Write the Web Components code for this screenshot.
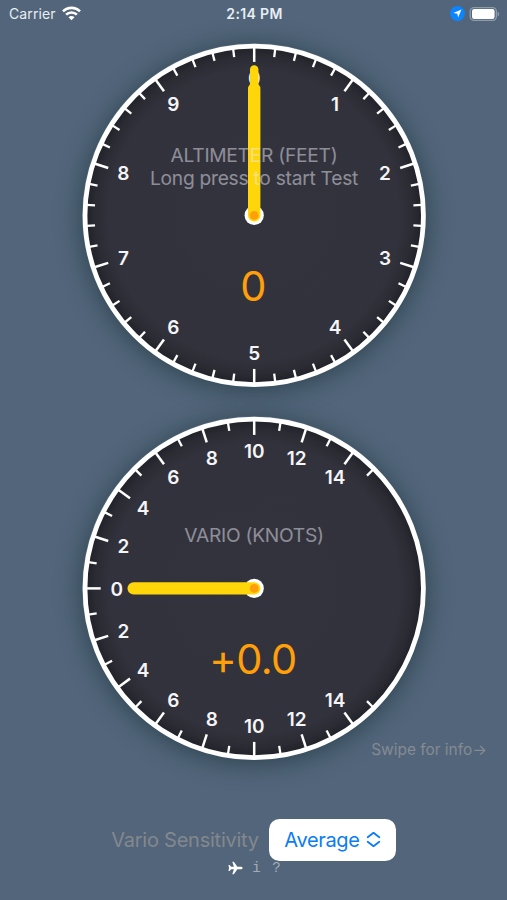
<!DOCTYPE html>
<html lang="en">
<head>
<meta charset="utf-8">
<title>Vario</title>
<style>
html,body{margin:0;height:100%}
body{background:#52657a;font-family:Inter,"Liberation Sans",sans-serif;overflow:hidden}
</style>
</head>
<body>
<vario-app></vario-app>
<script>
const define = (name, html, setup) => customElements.define(name, class extends HTMLElement {
  constructor() {
    super();
    this.attachShadow({ mode: 'open' }).innerHTML = html;
  }
  connectedCallback() { if (setup) setup(this, this.shadowRoot); }
});

define('status-bar', `
<style>
:host{display:grid;grid-template-columns:1fr auto 1fr;align-items:center;height:27px;padding:0 7px 0 9px;box-sizing:border-box;color:#e8eef3;font-size:14px}
.left,.right{display:flex;align-items:center}
.left{gap:6px;letter-spacing:.1px}
.right{justify-content:flex-end;gap:4px}
.time{font-weight:600;font-size:14px;letter-spacing:.35px}
svg{display:block}
</style>
<div class="left"><span>Carrier</span>
<svg width="19" height="15" viewBox="0 0 19 15" fill="none" stroke="#fff" stroke-width="2.6"><path d="M1 5.4a12 12 0 0 1 17 0"/><path d="M4.1 8.7a7.6 7.6 0 0 1 10.8 0"/><path d="M9.5 14.2 6.5 11.2a4.2 4.2 0 0 1 6 0z" fill="#fff" stroke="none"/></svg></div>
<div class="time">2:14 PM</div>
<div class="right">
<svg width="15" height="15" viewBox="0 0 15 15"><circle cx="7.5" cy="7.5" r="7.4" fill="#0a84ff"/><path d="M11.5 3.6 8.1 11.6 7.4 7.7 3.4 7z" fill="#fff"/></svg>
<svg width="31" height="14" viewBox="0 0 31 14"><rect x="1.2" y=".7" width="26.2" height="12.6" rx="3.8" fill="none" stroke="#8f9caa" stroke-width="1.3"/><rect x="3" y="2.1" width="22.6" height="9.8" rx="2.2" fill="#fff"/><path d="M28.6 4.7c2 .7 2 3.9 0 4.6z" fill="#8f9caa"/></svg>
</div>`);

define('dial-gauge', `
<style>
:host{display:block;position:relative;width:344px;height:344px;border-radius:50%;box-shadow:0 3px 24px rgba(20,45,50,.62)}
svg{display:block;overflow:visible}
text{font:600 19px Inter,"Liberation Sans",sans-serif;fill:#f5f5f7;text-anchor:middle}
.caption,.value{position:absolute;left:0;right:0;text-align:center;white-space:nowrap}
.caption{top:var(--caption-top);font-size:19.2px;letter-spacing:-.26px;line-height:23.5px;color:rgba(235,235,245,.5)}
.value{top:218px;right:2px;font-size:41.5px;line-height:50px;font-weight:400;letter-spacing:-.6px;color:#ff9f0a}
</style>
<svg width="344" height="344" viewBox="-172.2 -172.4 344 344">
<defs><radialGradient id="face"><stop offset="0" stop-color="#33333d"/><stop offset=".86" stop-color="#32323c"/><stop offset=".94" stop-color="#2b2b34"/><stop offset="1" stop-color="#202027"/></radialGradient></defs>
<circle r="169" fill="url(#face)"/>
<g class="scale" stroke="#fff"></g><g class="labels"></g>
<circle r="169.2" fill="none" stroke="#fff" stroke-width="4.8"/>
<circle r="9.6" fill="#fff"/>
<g class="hands" stroke="#ffd60a" stroke-linecap="round"></g>
<circle r="4.4" fill="#ff9f0a"/>
</svg>
<div class="caption"><slot></slot></div><div class="value"><slot name="value"></slot></div>`,
(host, root) => {
  const polar = (deg, r) => {
    const a = deg * Math.PI / 180;
    return [(r * Math.sin(a)).toFixed(2), (-r * Math.cos(a)).toFixed(2)];
  };
  const tick = (deg, major) => {
    const [x1, y1] = polar(deg, 168), [x2, y2] = polar(deg, major ? 153.5 : 159.5);
    return `<line x1="${x1}" y1="${y1}" x2="${x2}" y2="${y2}" stroke-width="${major ? 2.5 : 2.3}"/>`;
  };
  const label = (deg, text) => {
    const [x, y] = polar(deg, 137.5);
    return `<text x="${x}" y="${+y + 7.3}">${text}</text>`;
  };
  let ticks = '', labels = '', hands = '';
  if (host.getAttribute('kind') === 'altimeter') {
    for (let i = 0; i < 50; i++) ticks += tick(i * 7.2, i % 5 === 0);
    for (let i = 0; i < 10; i++) labels += label(i * 36, i);
    hands = '<line x2="0" y2="-146" stroke-width="8.4"/><line x2="0" y2="-126.5" stroke-width="12.4"/>';
  } else {
    for (let i = -15; i <= 15; i++) {
      ticks += tick(270 + i * 9, i % 2 === 0);
      if (i % 2 === 0) labels += label(270 + i * 9, Math.abs(i));
    }
    hands = '<line x2="-120.5" y2="0" stroke-width="12.4"/>';
  }
  root.querySelector('.scale').innerHTML = ticks;
  root.querySelector('.labels').innerHTML = labels;
  root.querySelector('.hands').innerHTML = hands;
});

define('menu-picker', `
<style>
:host{display:flex;align-items:center;justify-content:center;gap:10px;color:#84888e;font-size:20px}
.label{letter-spacing:-.24px}
.button{display:flex;align-items:center;justify-content:space-between;box-sizing:border-box;width:127px;height:42px;padding:0 15px 0 15.5px;border-radius:10.5px;background:#fff;color:#0a7cf5;letter-spacing:-.35px}
</style>
<span class="label"><slot></slot></span>
<span class="button"><span class="choice"><slot name="choice"></slot></span>
<svg width="15" height="18" viewBox="0 0 15 18" fill="none" stroke="#0a7cf5" stroke-width="1.8" stroke-linecap="round" stroke-linejoin="round"><path d="M1.7 6.2 7.5 1.8l5.8 4.4M1.7 10.8l5.8 4.4 5.8-4.4"/></svg></span>`);

define('page-tabs', `
<style>
:host{display:flex;align-items:center;justify-content:center;height:16px;padding-left:7px;color:#a3adb8;font:14px "Liberation Mono",monospace}
span{width:20px;text-align:center}
svg{display:block;margin-right:4px}
</style>
<svg width="15" height="14" viewBox="0 0 15 14" fill="#fff"><path d="M14.6 7c0-.8-.9-1.3-2.1-1.3H9.4L5.8.7H4.3l1.6 5H3.2L1.6 3.9H.4L1.1 7 .4 10.1h1.2l1.6-1.8h2.7l-1.6 5h1.5l3.6-5h3.1c1.2 0 2.1-.5 2.1-1.3z"/></svg>
<span>i</span><span>?</span>`);

define('vario-app', `
<style>
:host{display:flex;flex-direction:column;width:507px;height:900px;background:#52657a}
dial-gauge{align-self:center;margin-left:1px}
.alt{margin-top:16px;--caption-top:100.5px}
.var{margin-top:29px;--caption-top:107.5px}
.hint{align-self:flex-end;margin:-20px 20px 0 0;height:20px;line-height:20px;font-size:15.5px;letter-spacing:-.03px;color:#858b92}
menu-picker{margin-top:59px}
page-tabs{margin-top:-1px}
</style>
<status-bar></status-bar>
<dial-gauge class="alt" kind="altimeter">ALTIMETER (FEET)<br>Long press to start Test<span slot="value">0</span></dial-gauge>
<dial-gauge class="var" kind="vario">VARIO (KNOTS)<span slot="value">+0.0</span></dial-gauge>
<div class="hint">Swipe for info→</div>
<menu-picker>Vario Sensitivity<span slot="choice">Average</span></menu-picker>
<page-tabs></page-tabs>`);
</script>
</body>
</html>
